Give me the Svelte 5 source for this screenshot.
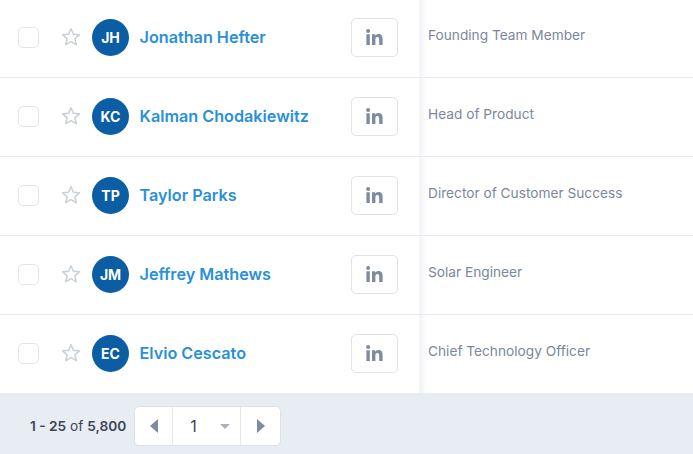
<script>
    const people = [
        { initials: 'JH', name: 'Jonathan Hefter', title: 'Founding Team Member' },
        { initials: 'KC', name: 'Kalman Chodakiewitz', title: 'Head of Product' },
        { initials: 'TP', name: 'Taylor Parks', title: 'Director of Customer Success' },
        { initials: 'JM', name: 'Jeffrey Mathews', title: 'Solar Engineer' },
        { initials: 'EC', name: 'Elvio Cescato', title: 'Chief Technology Officer' }
    ];
</script>

<div class="page">
    <div class="rows">
        {#each people as person}
            <div class="row">
                <div class="fixed">
                    <span class="checkbox"></span>
                    <svg class="star" viewBox="0 0 20 20" width="20" height="20">
                        <path d="M10 1.800l2.400 5.500 5.900.6-4.400 3.900 1.300 5.800-5.200-3-5.200 3 1.300-5.800L1.700 7.900l5.900-.6z" fill="none" stroke="#c9cfdb" stroke-width="1.600" stroke-linejoin="round" />
                    </svg>
                    <span class="avatar">{person.initials}</span>
                    <a class="name" href="#top">{person.name}</a>
                    <span class="linkedin">
                        <svg viewBox="0 0 17 16" width="17" height="16">
                            <path d="M.4 5.200h3.400V16H.4zM2.100 0a2 2 0 1 1 0 4 2 2 0 0 1 0-4zM6 5.200h3.200v1.500c.5-.9 1.600-1.800 3.300-1.800 3.500 0 4.100 2.300 4.100 5.200V16h-3.400v-5.200c0-1.300-.1-2.900-1.800-2.900s-2 1.400-2 2.800V16H6z" fill="#7e8ba0" />
                        </svg>
                    </span>
                </div>
                <div class="title">{person.title}</div>
            </div>
        {/each}
    </div>

    <div class="footer">
        <span class="count"><b>1 - 25</b> of <b>5,800</b></span>
        <div class="pager">
            <span class="arrow prev"><i class="left"></i></span>
            <span class="page-select">1<i class="caret"></i></span>
            <span class="arrow next"><i class="right"></i></span>
        </div>
    </div>
</div>

<style>
    :global(body) {
        margin: 0;
        background: white;
    }

    .page {
        width: 693px;
        height: 454px;
        overflow: hidden;
        display: flex;
        flex-direction: column;
        font-family: Inter, Lato, sans-serif;
    }

    .rows {
        height: 394px;
        margin-top: -1px;
        flex: none;
    }

    .row {
        height: 78px;
        border-bottom: 1px solid #e6e9ef;
        display: flex;
    }

    .row:last-child {
        border-bottom: none;
    }

    .fixed {
        width: 419px;
        flex: none;
        display: flex;
        align-items: center;
        padding-left: 18px;
        padding-bottom: 2px;
        box-sizing: border-box;
    }

    .checkbox {
        width: 21px;
        height: 21px;
        border: 1px solid #e1e4ea;
        border-radius: 5px;
        box-sizing: border-box;
        margin-right: 22px;
    }

    .star {
        margin-right: 11px;
    }

    .avatar {
        width: 37px;
        height: 37px;
        border-radius: 50%;
        background: #0b5ea4;
        color: white;
        font-size: 14px;
        font-weight: 700;
        display: flex;
        align-items: center;
        justify-content: center;
        flex: none;
        margin-right: 10.500px;
    }

    .name {
        color: #2a90d9;
        font-size: 16.2px;
        font-weight: 600;
        text-decoration: none;
        flex: 1;
    }

    .linkedin {
        width: 47px;
        height: 39px;
        border: 1px solid #dfe3ea;
        border-radius: 5px;
        box-sizing: border-box;
        display: flex;
        align-items: center;
        justify-content: center;
        margin-right: 21px;
    }

    .title {
        flex: 1;
        padding-left: 9px;
        padding-bottom: 6px;
        display: flex;
        align-items: center;
        color: #7c879c;
        font-size: 13.7px;
        background: linear-gradient(to right, #f2f3f6, white 9px);
    }

    .footer {
        height: 61px;
        flex: none;
        background: #e8ecf3;
        display: flex;
        align-items: center;
        padding-left: 30px;
        padding-top: 5px;
        box-sizing: border-box;
        gap: 8px;
        color: #3d4657;
        font-size: 13.7px;
    }

    .count b {
        font-weight: 600;
    }

    .pager {
        display: flex;
        width: 147px;
        height: 40px;
        background: white;
        border: 1px solid #dce0e8;
        border-radius: 5px;
        box-sizing: border-box;
    }

    .arrow {
        display: flex;
        align-items: center;
        justify-content: center;
    }

    .prev {
        width: 37px;
    }

    .next {
        width: 39px;
    }

    .page-select {
        flex: 1;
        border-left: 1px solid #e3e6ec;
        border-right: 1px solid #e3e6ec;
        display: flex;
        align-items: center;
        padding-left: 17px;
        font-size: 16px;
        color: #3d4657;
    }

    .left, .right, .caret {
        width: 0;
        height: 0;
        border-style: solid;
        border-color: transparent;
    }

    .left {
        border-width: 7px 8px 7px 0;
        border-right-color: #7e8ba0;
    }

    .right {
        border-width: 7px 0 7px 8px;
        border-left-color: #7e8ba0;
    }

    .caret {
        border-width: 5px 5.500px 0;
        border-top-color: #a9b2c2;
        margin-left: 23px;
    }
</style>
